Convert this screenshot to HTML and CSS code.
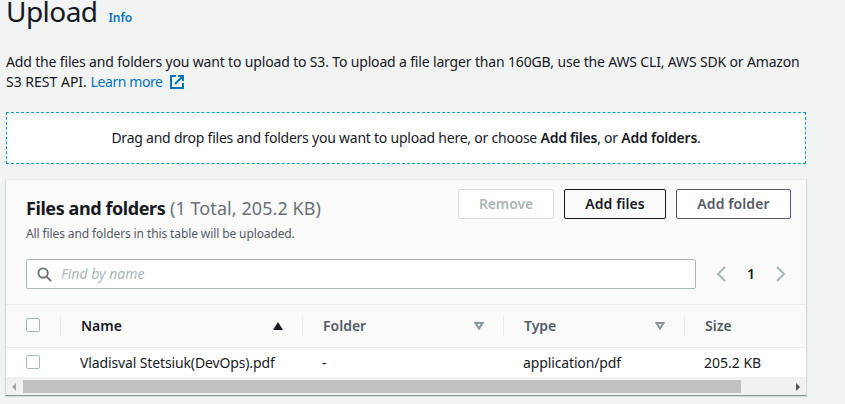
FILE: index.html
```
<!DOCTYPE html>
<html lang="en">
<head>
<meta charset="utf-8">
<title>Upload</title>
<link rel="stylesheet" href="styles.css">
</head>
<body>
<main class="page">
  <header class="title-row">
    <h1 class="title">Upload</h1>
    <a class="info">Info</a>
  </header>
  <p class="intro"><span class="intro-first">Add the files and folders you want to upload to S3. To upload a file larger than 160GB, use the AWS CLI, AWS SDK or Amazon</span><br><span class="intro-second">S3 REST API. <a class="link">Learn more</a></span><svg class="external" viewBox="0 0 14 14"><path d="M6 1H1v12h12V8M8 1h5v5M13 1L5 9"/></svg></p>
  <div class="dropzone"><span>Drag and drop files and folders you want to upload here, or choose <b>Add files</b>, or <b>Add folders</b>.</span></div>
  <section class="panel">
    <div class="panel-head">
      <div class="heading">
        <h2><span class="h-name">Files and folders</span> <span class="count">(1 Total, 205.2 KB)</span></h2>
        <p class="desc">All files and folders in this table will be uploaded.</p>
      </div>
      <div class="actions">
        <button class="btn remove">Remove</button>
        <button class="btn files">Add files</button>
        <button class="btn folder">Add folder</button>
      </div>
    </div>
    <div class="tools">
      <div class="search">
        <svg class="glass" viewBox="0 0 16 16"><circle cx="6.5" cy="6.5" r="5"/><path d="M10.2 10.2L15 15"/></svg>
        <span class="placeholder">Find by name</span>
      </div>
      <div class="pager">
        <svg class="chev" viewBox="0 0 10 16"><path d="M9 1L2 8l7 7"/></svg>
        <b>1</b>
        <svg class="chev" viewBox="0 0 10 16"><path d="M1 1l7 7-7 7"/></svg>
      </div>
    </div>
    <div class="row head">
      <div class="cell check"><i class="box"></i></div>
      <div class="cell active"><span>Name</span><svg class="sort" viewBox="0 0 10 8"><path class="solid" d="M5 0l5 8H0z"/></svg></div>
      <div class="cell"><span>Folder</span><svg class="sort" viewBox="0 0 10 8"><path class="hollow" d="M1.5 1h7L5 6.6z"/></svg></div>
      <div class="cell"><span>Type</span><svg class="sort" viewBox="0 0 10 8"><path class="hollow" d="M1.5 1h7L5 6.6z"/></svg></div>
      <div class="cell"><span>Size</span></div>
    </div>
    <div class="row data">
      <div class="cell check"><i class="box"></i></div>
      <div class="cell"><span class="v-name">Vladisval Stetsiuk(DevOps).pdf</span></div>
      <div class="cell"><span>-</span></div>
      <div class="cell"><span class="v-type">application/pdf</span></div>
      <div class="cell"><span>205.2 KB</span></div>
    </div>
    <div class="scrollbar">
      <svg class="arrow off" viewBox="0 0 4 8"><path d="M4 0v8L0 4z"/></svg>
      <div class="track"><div class="thumb"></div></div>
      <svg class="arrow" viewBox="0 0 4 8"><path d="M0 0v8l4-4z"/></svg>
    </div>
  </section>
</main>
</body>
</html>
```
FILE: styles.css
```
* { box-sizing: border-box; }
body {
  margin: 0;
  height: 404px;
  overflow: hidden;
  background: #f2f3f3;
  color: #16191f;
  font: 14px/20px "Noto Sans", sans-serif;
}
h1, h2, p { margin: 0; font-weight: 400; }
b { font-weight: 600; }
span { white-space: nowrap; }
.page { width: 800px; margin-left: 6px; }
.title-row { display: flex; align-items: baseline; gap: 11px; height: 52px; }
.title { font-size: 28px; line-height: 36px; margin-top: -7px; letter-spacing: -.55px; }
.info { color: #0073bb; font-size: 12px; font-weight: 600; letter-spacing: -.1px; }
.intro { height: 60px; }
.intro-first { letter-spacing: -.16px; }
.intro-second { letter-spacing: 0; }
.link { color: #0073bb; letter-spacing: -.4px; }
.external { width: 14px; height: 14px; margin-left: 7px; vertical-align: -2px; fill: none; stroke: #0073bb; stroke-width: 2; }
.dropzone { display: flex; align-items: center; justify-content: center; height: 52px; background: #fff; border: 1px dashed #00a1c9; letter-spacing: -.23px; }
.panel { width: 802px; height: 217px; margin: 15px 0 0 -1px; background: #fafafa; border: 1px solid #d5dbdb; border-top-color: #eaeded; border-bottom-color: #879596; box-shadow: 0 1px 1px #d5dbdb; }
.panel-head { display: flex; justify-content: space-between; height: 79px; padding: 9px 15px 0 20px; }
h2 { margin-top: 7px; font-size: 18px; line-height: 24px; }
.h-name { font-weight: 700; letter-spacing: -.42px; }
.count { color: #687078; letter-spacing: .07px; }
.desc { margin-top: 4px; color: #545b64; font-size: 12px; letter-spacing: -.11px; }
.actions { display: flex; gap: 10px; }
.btn { height: 30px; padding: 0; background: #fff; border: 1px solid #545b64; border-radius: 2px; color: #545b64; font: 600 14px/20px "Noto Sans", sans-serif; letter-spacing: .1px; }
.remove { width: 96px; color: #aab7b8; border-color: #d5dbdb; letter-spacing: -.1px; }
.files { width: 102px; color: #16191f; border-color: #16191f; background: #fafafa; }
.folder { width: 115px; }
.tools { display: flex; justify-content: space-between; height: 45px; padding: 0 20px 0 20px; }
.search { display: flex; align-items: center; width: 670px; height: 30px; padding-left: 10px; background: #fff; border: 1px solid #aab7b8; border-radius: 2px; }
.glass { width: 15px; height: 15px; margin-right: 9px; fill: none; stroke: #687078; stroke-width: 2; }
.placeholder { color: #aab7b8; font-style: italic; letter-spacing: 0; }
.pager { display: flex; align-items: center; justify-content: space-between; width: 70px; height: 30px; }
.chev { width: 10px; height: 16px; fill: none; stroke: #aab7b8; stroke-width: 2; }
.row { display: grid; grid-template-columns: 54px 242px 201px 181px 1fr; }
.head { height: 44px; border: solid #eaeded; border-width: 1px 0; color: #545b64; font-weight: 600; align-items: center; }
.data { height: 29px; background: #fff; align-items: center; }
.cell { display: flex; align-items: center; justify-content: space-between; height: 21px; padding: 0 19px 0 20px; }
.head .cell + .cell { border-left: 1px solid #eaeded; }
.row .check { padding: 0 0 2px 20px; }
.active { color: #16191f; }
.v-name, .v-type { letter-spacing: -.13px; }
.box { width: 14px; height: 14px; flex: none; background: #fff; border: 1px solid #aab7b8; border-radius: 2px; }
.sort { width: 10px; height: 8px; }
.solid { fill: #16191f; }
.hollow { fill: none; stroke: #879596; stroke-width: 2; }
.scrollbar { display: flex; align-items: center; justify-content: space-between; height: 18px; padding: 1px 6px 0; background: #f1f1f1; }
.track { width: 766px; height: 13px; }
.thumb { width: 718px; height: 13px; background: #c1c1c1; }
.arrow { width: 4px; height: 8px; fill: #505050; }
.off { fill: #a3a3a3; }
```
